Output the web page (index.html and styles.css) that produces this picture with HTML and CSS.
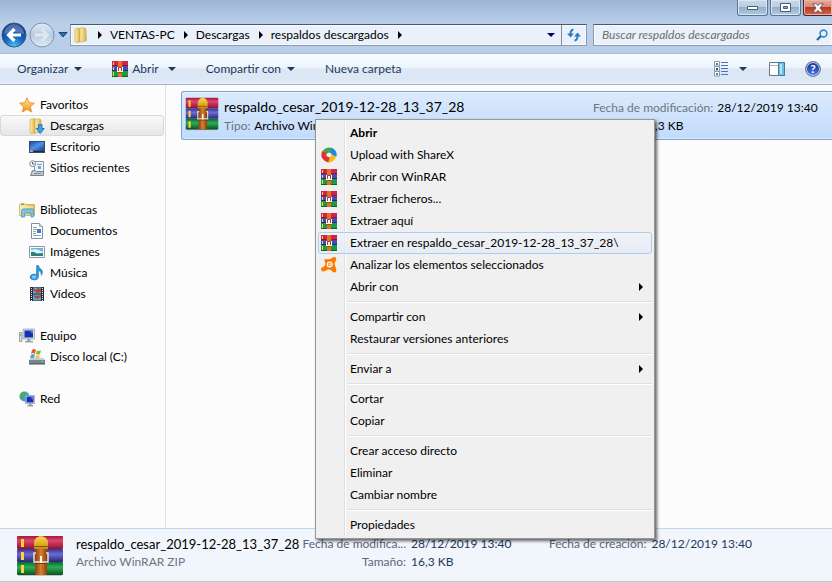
FILE: index.html
```html
<!DOCTYPE html>
<html lang="es">
<head>
<meta charset="utf-8">
<title>respaldos descargados</title>
<link rel="stylesheet" href="styles.css">
</head>
<body>
<svg class="defs" aria-hidden="true">
  <defs>
    <linearGradient id="red" x1="0" y1="0" x2="0" y2="1"><stop offset="0" stop-color="#9c1c3e"/><stop offset=".35" stop-color="#e04468"/><stop offset="1" stop-color="#8e1230"/></linearGradient>
    <linearGradient id="blue" x1="0" y1="0" x2="0" y2="1"><stop offset="0" stop-color="#36348c"/><stop offset=".4" stop-color="#6a6ad8"/><stop offset="1" stop-color="#28266e"/></linearGradient>
    <linearGradient id="green" x1="0" y1="0" x2="0" y2="1"><stop offset="0" stop-color="#0c6a2c"/><stop offset=".4" stop-color="#2cae58"/><stop offset="1" stop-color="#08521f"/></linearGradient>
    <linearGradient id="strap" x1="0" y1="0" x2="1" y2="0"><stop offset="0" stop-color="#8c3f0c"/><stop offset=".5" stop-color="#d8802f"/><stop offset="1" stop-color="#8c3f0c"/></linearGradient>
    <linearGradient id="gold" x1="0" y1="0" x2="0" y2="1"><stop offset="0" stop-color="#ffd94a"/><stop offset="1" stop-color="#c98a12"/></linearGradient>
    <linearGradient id="folder" x1="0" y1="0" x2="1" y2="0"><stop offset="0" stop-color="#fdf0b0"/><stop offset="1" stop-color="#dcb34c"/></linearGradient>
    <linearGradient id="sky" x1="0" y1="0" x2="1" y2="1"><stop offset="0" stop-color="#1c4fb4"/><stop offset=".5" stop-color="#4b94e8"/><stop offset="1" stop-color="#173f8e"/></linearGradient>
    <linearGradient id="star" x1="0" y1="0" x2="0" y2="1"><stop offset="0" stop-color="#fff0a0"/><stop offset="1" stop-color="#f58a14"/></linearGradient>
    <radialGradient id="orb" cx=".5" cy="1" r=".9"><stop offset="0" stop-color="#42d2ff"/><stop offset=".45" stop-color="#1769c6"/><stop offset="1" stop-color="#133a8c"/></radialGradient>
    <linearGradient id="ghost" x1="0" y1="0" x2="0" y2="1"><stop offset="0" stop-color="#e4ecf5"/><stop offset=".5" stop-color="#b9cbe0"/><stop offset="1" stop-color="#dfeaf6"/></linearGradient>

    <symbol id="rar" viewBox="0 0 16 16">
      <path fill="#d0214f" d="M0 0h16v5H0z"/><path fill="#8e1436" d="M0 4h16v1H0z"/>
      <path fill="#4a48b4" d="M0 5h16v5H0z"/><path fill="#2c2a78" d="M0 9h16v1H0z"/>
      <path fill="#1b9c40" d="M0 10h16v6H0z"/><path fill="#0c6326" d="M0 15h16v1H0z"/>
      <path fill="#ffd23c" d="M1 1h1v3H1zM1 6h1v3H1zM1 11h1v4H1z"/>
      <path fill="#e07022" d="M6 0h4v16H6z"/><path fill="#a84710" d="M5 4h1v1H5zM10 4h1v1h-1zM6 11h4v1H6z"/>
      <path fill="#fff" d="M5 6h1v5H5zM10 6h1v5h-1zM6 10h4v1H6z"/><path fill="#c03a1c" d="M6 6h4v4H6z"/><path fill="#fff" d="M7 7h2v3H7z"/>
    </symbol>
    <symbol id="rar-large" viewBox="0 0 48 42" preserveAspectRatio="none">
      <path fill="#0003" d="M2 39h44v2H2z"/>
      <rect x="1" y="1" width="46" height="13" rx="1" fill="url(#red)"/>
      <rect x="1" y="14" width="46" height="13" rx="1" fill="url(#blue)"/>
      <rect x="1" y="27" width="46" height="13" rx="1" fill="url(#green)"/>
      <path fill="#ffd23c" d="M5 4h3v8H5zM5 17h3v8H5zM5 30h3v8H5z"/>
      <path fill="url(#strap)" d="M19 3h12v37H19z"/>
      <path fill="url(#gold)" d="M18 8c0-9 14-9 14 0v6H18z"/>
      <path fill="#8a520e" d="M18 11h14v1H18z"/>
      <path fill="none" stroke="#e9dfd8" stroke-width="1.500" d="M20 18h-2v9h14v-9h-2"/>
      <path fill="#fff" d="M24 21h2v7h-2z"/><path fill="#7a350a" d="M19 28h12v1H19z"/>
    </symbol>
    <symbol id="folder-icon" viewBox="0 0 16 16">
      <path fill="url(#folder)" stroke="#c9a548" stroke-width=".6" d="M2 2l4-1 1 1v13l-4 .5L2 14z"/>
      <path fill="url(#folder)" stroke="#c9a548" stroke-width=".6" d="M7 1h5l1 1v12l-5 1H7z"/><path fill="#8fc7e4" d="M13 10h1v4h-1z"/><path fill="#edd583" d="M13 5h1v5h-1z"/>
    </symbol>
    <symbol id="star-icon" viewBox="0 0 16 16"><path fill="url(#star)" stroke="#e08a24" stroke-width=".8" d="M8 .8l2.100 4.800 5.300.6-4 3.600 1.200 5.200L8 12.300 3.400 15l1.200-5.200-4-3.600 5.300-.6z"/></symbol>
    <symbol id="downloads" viewBox="0 0 16 16"><path fill="url(#folder)" stroke="#c9a548" stroke-width=".6" d="M1 1.500l4-1L6 1v14l-4 .5-1-1z"/><path fill="url(#folder)" stroke="#c9a548" stroke-width=".6" d="M6 1h5l1 1v12l-5 1H6z"/><path fill="#38a6ea" stroke="#1467b4" stroke-width=".8" d="M9.500 6.500h3.500v4h2.300L11.300 15.500 7.200 10.500h2.300z"/></symbol>
    <symbol id="desktop" viewBox="0 0 16 16"><path fill="#344a6c" d="M0 2h16v12H0z"/><path fill="url(#sky)" d="M1 3h14v8.500H1z"/><path fill="#1d2c46" d="M1 12h14v1H1z"/><path fill="#47d5f2" d="M1 11h3v2H1z"/><path fill="#ed5c36" d="M2 10h2v2H2z"/></symbol>
    <symbol id="recent" viewBox="0 0 16 16"><path fill="#f2f6fa" stroke="#8f9aa6" d="M5.500 1.500h9v10h-9z"/><path fill="#6aa6d8" d="M8 4h5v1H8zM9 6h3v3H9z"/><path fill="#c5ccd2" stroke="#79828b" d="M3.500 10.500h3l1 1h7v4h-13z"/><path fill="#888" d="M5 13h7v1H5z"/><circle cx="3.700" cy="3.700" r="3" fill="#f4f7fa" stroke="#808b97"/><path fill="none" stroke="#44698d" d="M3.500 2v2h2"/></symbol>
    <symbol id="library" viewBox="0 0 16 16"><path fill="url(#folder)" stroke="#c9a548" stroke-width=".7" d="M.5 2.500l1-1h4l1 1h9v11H.5z"/><path fill="#67b846" d="M2 2h3v1H2z"/><path fill="#fff2bd" d="M1.500 4.500h13v1h-13z"/><path fill="#7bc6e8" stroke="#3d8fba" stroke-width=".7" d="M2.500 15V9q0-2 2-2h8q2 0 2 2v6H12v-3q0-1-1-1H6.500q-1 0-1 1v3z"/></symbol>
    <symbol id="document" viewBox="0 0 16 16"><path fill="#fff" stroke="#7d8fa2" d="M2.500.5h8l3 3v12h-11z"/><path fill="#d4dfe9" stroke="#7d8fa2" stroke-width=".7" d="M10.500.5v3h3"/><path stroke="#92a7bc" d="M4 4.500h4M4 6.500h4M4 8.500h3M4 10.500h3M4 12.500h8"/><path fill="#3c7fce" d="M8 6h4v4H8z"/></symbol>
    <symbol id="image" viewBox="0 0 16 16"><path fill="#fff" stroke="#8a99a6" d="M.5 2.500h15v11H.5z"/><path fill="#69b7e8" d="M2 4h12v8H2z"/><path fill="#e4f5fd" d="M2 6q6-2 12 2v1H2z"/><path fill="#2f7f78" d="M2 8q3-1 6 2l6-1v3H2z"/></symbol>
    <symbol id="music" viewBox="0 0 16 16"><path fill="#2f92dc" stroke="#196cb0" stroke-width=".5" d="M7.500.5h2q0 2 3 4 2 2 0 6 0-4-3-5v6q0 3.500-4.500 3.500-4-.5-4-3 .5-3 4-3l2.500.5z"/><ellipse cx="5" cy="12" rx="2.400" ry="1.700" fill="#74c9f5"/></symbol>
    <symbol id="video" viewBox="0 0 16 16"><path fill="#26313e" d="M1 1h14v14H1z"/><path fill="#5ca8dc" d="M4 1.500h8v6H4zM4 8.500h8v6H4z"/><path fill="#b3492e" d="M4 2l3 2 2-2 3 1v3l-4 1-4-3zM5 9l2 1 5-1v2l-4 2-3-2z"/><path stroke="#e8edf0" stroke-width="1" stroke-dasharray="1 1" d="M2.500 2v13M13.500 2v13"/></symbol>
    <symbol id="computer" viewBox="0 0 16 16"><path fill="#d7dce0" stroke="#7d878f" stroke-width=".7" d="M.5 4.500h2.500v9H.5z"/><path fill="#6ac743" d="M1 6h1v2H1z"/><path fill="#d6dbe0" stroke="#8b949c" stroke-width=".6" d="M4 1h11.500v10H4z"/><path fill="#1631b4" d="M5.500 2.500h8.500v7H5.500z"/><path fill="#5878ea" d="M9 2.500h5v3z"/><path fill="#9aa3ab" d="M8 11h3.500v2H14v1.500H6V13h2z"/></symbol>
    <symbol id="drive" viewBox="0 0 16 16"><path fill="#e45c2c" d="M3 1q2-2 4 0L6 5Q4 3 2 5z"/><path fill="#7bbe38" d="M8 1.500q2 1 4-.5l-1 4q-2 1-4 0z"/><path fill="#49a4df" d="M2 6q2-2 4 0L5 9H1z"/><path fill="#f9c42c" d="M7 6q2 1 4 0l-1 3.500H6z"/><path fill="#c5ccd1" d="M1.500 9h13L16 11H0z"/><path fill="#78848e" d="M0 11h16v4H0z"/><path fill="#454f58" d="M0 14.500h16v1H0z"/><path fill="#68e15c" d="M12 12h2v1h-2z"/></symbol>
    <symbol id="network" viewBox="0 0 16 16"><circle cx="5.500" cy="5.500" r="5" fill="#3d9ee0"/><path fill="#47b149" d="M2 2q2-2 4-1l1 2-3 2 1 2-3 1-1-3zM6 6l3-1v4H7z"/><path fill="#dde1e4" stroke="#7f8990" stroke-width=".6" d="M6.500 4.500h9.200v8H6.500z"/><path fill="#1631b4" d="M7.500 5.500h7v6h-7z"/><path fill="#5878ea" d="M11 5.500h3.500v4z"/><path fill="#959da5" d="M10 12.500h2.500v1.500H14v1.500H8.500V14H10z"/></symbol>
    <symbol id="sharex" viewBox="0 0 16 16"><g fill="none" stroke-width="5"><path stroke="#38ac48" d="M3.500 5.500Q7 1.500 11 4"/><path stroke="#2687e4" d="M9.500 3q4.500 2 3.500 6"/><path stroke="#f8bd19" d="M13 8.500q-2 5-6.500 4.500"/><path stroke="#e33233" d="M8 13Q1 11 3.500 5"/></g></symbol>
    <symbol id="avast" viewBox="0 0 16 16"><path fill="#ff7800" d="M4.500 2Q9 3 11 1q3-2 4 0 1 2-1 4-1 3 1 6 1 4-1 4.500-2 .5-4-2.500-3-1-5 .5-4 2-5-.5-.5-2.500 3-3.500Q5 8 4 5 2.500 2 4.500 2z"/><circle cx="8.700" cy="7.500" r="2.400" fill="none" stroke="#fff" stroke-width="1.200"/><circle cx="8.700" cy="7.500" r=".9" fill="#fff"/></symbol>
    <symbol id="down" viewBox="0 0 8 4"><path fill="currentColor" d="M0 0h8L4 4z"/></symbol>
    <symbol id="right" viewBox="0 0 4 8"><path fill="currentColor" d="M0 0l4 4-4 4z"/></symbol>
  </defs>
</svg>

<div class="window">
  <header class="titlebar">
    <button class="caption" aria-label="Minimizar"><svg width="12" height="6" viewBox="0 0 12 6"><path fill="#fff" stroke="#4d5c70" d="M.5 1.500h10v3H.5z"/></svg></button>
    <button class="caption" aria-label="Maximizar"><svg width="12" height="10" viewBox="0 0 12 10"><path fill="#fff" stroke="#4d5c70" d="M.5.5h10v8H.5z"/><path fill="#8fa8c4" stroke="#4d5c70" d="M3.500 3.500h4v2h-4z"/></svg></button>
    <button class="caption close" aria-label="Cerrar"><svg width="12" height="10" viewBox="0 0 12 10"><path fill="#fff" stroke="#5c4650" stroke-width=".8" d="M.8.8h3.500L6 2.700 7.700.8h3.500L8 5l3.200 4.200H7.700L6 7.300 4.300 9.200H.8L4 5z"/></svg></button>
  </header>

  <nav class="navbar">
    <div class="history">
      <button aria-label="Atrás"><svg width="26" height="26" viewBox="0 0 26 26"><circle cx="13" cy="13" r="12" fill="url(#orb)" stroke="#3d5678"/><path fill="#fff" opacity=".25" d="M3 12a10 10 0 0 1 20 0q-10-4-20 0z"/><path fill="none" stroke="#fff" stroke-width="3.200" d="M20 13H8M13.500 7L7.500 13l6 6"/></svg></button>
      <button aria-label="Adelante"><svg width="26" height="26" viewBox="0 0 26 26"><circle cx="13" cy="13" r="12" fill="url(#ghost)" stroke="#7c92ae"/><path fill="none" stroke="#dce7f2" stroke-width="3" d="M6 13h12M12.500 7l6 6-6 6"/></svg></button>
      <button class="recent-pages" aria-label="Páginas recientes"><svg width="10" height="6" viewBox="0 0 10 6"><path fill="#2674a8" stroke="#1b3f78" d="M1 .5h8L5 5z"/></svg></button>
    </div>
    <div class="address">
      <svg class="icon" width="16" height="16"><use href="#folder-icon"/></svg>
      <svg class="sep" width="4" height="8"><use href="#right"/></svg>
      <button>VENTAS-PC</button>
      <svg class="sep" width="4" height="8"><use href="#right"/></svg>
      <button>Descargas</button>
      <svg class="sep" width="4" height="8"><use href="#right"/></svg>
      <button>respaldos descargados</button>
      <svg class="sep" width="4" height="8"><use href="#right"/></svg>
      <button class="address-menu" aria-label="Ubicaciones anteriores"><svg width="8" height="4"><use href="#down"/></svg></button>
      <button class="refresh" aria-label="Actualizar"><svg width="14" height="14" viewBox="0 0 14 14"><g fill="none" stroke="#2b7cc8" stroke-width="2"><path d="M6.500 1.500Q3.500 2 3.500 6M7.500 12.500q3-.5 3-4.500"/></g><path fill="#2b7cc8" d="M0 5.500h7L3.500 9.500zM7 8.500h7L10.500 4.500z"/></svg></button>
    </div>
    <label class="search">
      <input type="search" aria-label="Buscar" placeholder="Buscar respaldos descargados">
      <svg width="12" height="12" viewBox="0 0 12 12"><circle cx="7.500" cy="4.500" r="3.400" fill="#e6f3fd" stroke="#3a86cc" stroke-width="1.600"/><path stroke="#2862a8" stroke-width="2.200" d="M5 7L1 11"/></svg>
    </label>
  </nav>

  <div class="toolbar">
    <button>Organizar <svg width="8" height="4"><use href="#down"/></svg></button>
    <button class="open"><svg width="16" height="16"><use href="#rar"/></svg><span>Abrir</span><svg width="8" height="4"><use href="#down"/></svg></button>
    <button>Compartir con <svg width="8" height="4"><use href="#down"/></svg></button>
    <button>Nueva carpeta</button>
    <div class="tools">
      <button aria-label="Cambiar la vista"><svg width="15" height="16" viewBox="0 0 15 16"><path fill="#fff" stroke="#8b98a5" d="M.5.500h5v4.500h-5zM.5 5.500h5v4.500h-5zM.5 10.500h5v4.500h-5z"/><path fill="#20a08a" d="M2 2h2v2H2zM2 12h2v2H2z"/><path fill="#234f9c" d="M2 7h2v2H2z"/><path stroke="#4579bb" d="M7 1.500h7M7 4.500h7M7 7.500h7M7 10.500h7M7 13.500h7"/></svg></button>
      <button class="view-menu" aria-label="Más opciones"><svg width="8" height="4"><use href="#down"/></svg></button>
      <button class="preview" aria-label="Panel de vista previa"><svg width="16" height="14" viewBox="0 0 16 14"><path fill="#fff" stroke="#66788a" d="M.5.500h15v13H.5z"/><path stroke="#a5b1bc" d="M1 3.500h8"/><path fill="#6cbfdf" stroke="#437d9c" d="M9.500.5h6v13h-6z"/><path fill="#b4e4f5" d="M11 2h2v10h-2z"/></svg></button>
      <button aria-label="Ayuda" class="help"><span>?</span></button>
    </div>
  </div>

  <div class="body">
    <aside class="sidebar">
      <ul class="group">
        <li><a href="#"><svg><use href="#star-icon"/></svg>Favoritos</a></li>
        <li class="child selected"><a href="#"><svg><use href="#downloads"/></svg>Descargas</a></li>
        <li class="child"><a href="#"><svg><use href="#desktop"/></svg>Escritorio</a></li>
        <li class="child"><a href="#"><svg><use href="#recent"/></svg>Sitios recientes</a></li>
      </ul>
      <ul class="group">
        <li><a href="#"><svg><use href="#library"/></svg>Bibliotecas</a></li>
        <li class="child"><a href="#"><svg><use href="#document"/></svg>Documentos</a></li>
        <li class="child"><a href="#"><svg><use href="#image"/></svg>Imágenes</a></li>
        <li class="child"><a href="#"><svg><use href="#music"/></svg>Música</a></li>
        <li class="child"><a href="#"><svg><use href="#video"/></svg>Vídeos</a></li>
      </ul>
      <ul class="group">
        <li><a href="#"><svg><use href="#computer"/></svg>Equipo</a></li>
        <li class="child"><a href="#"><svg><use href="#drive"/></svg>Disco local (C:)</a></li>
      </ul>
      <ul class="group">
        <li><a href="#"><svg><use href="#network"/></svg>Red</a></li>
      </ul>
    </aside>
    <main class="files">
      <div class="file">
        <svg width="34" height="34"><use href="#rar-large"/></svg>
        <div class="file-main">
          <div class="file-name">respaldo_cesar_2019-12-28_13_37_28</div>
          <div class="meta"><span class="label">Tipo:</span> Archivo WinRAR</div>
        </div>
        <div class="file-side">
          <div class="meta"><span class="label">Fecha de modificación:</span> 28/12/2019 13:40</div>
          <div class="meta"><span class="label">Tamaño:</span> 16,3 KB</div>
        </div>
      </div>
    </main>
  </div>

  <footer class="details">
    <svg width="48" height="42"><use href="#rar-large"/></svg>
    <div class="summary">
      <div class="details-name">respaldo_cesar_2019-12-28_13_37_28</div>
      <div class="label">Archivo WinRAR ZIP</div>
    </div>
    <dl class="modified">
      <dt>Fecha de modifica...</dt><dd>28/12/2019 13:40</dd>
      <dt>Tamaño:</dt><dd>16,3 KB</dd>
    </dl>
    <dl>
      <dt>Fecha de creación:</dt><dd>28/12/2019 13:40</dd>
    </dl>
  </footer>
</div>

<div class="menu" role="menu">
  <button role="menuitem"><i></i><b>Abrir</b></button>
  <button role="menuitem"><svg><use href="#sharex"/></svg><span>Upload with ShareX</span></button>
  <button role="menuitem"><svg><use href="#rar"/></svg><span>Abrir con WinRAR</span></button>
  <button role="menuitem"><svg><use href="#rar"/></svg><span>Extraer ficheros...</span></button>
  <button role="menuitem"><svg><use href="#rar"/></svg><span>Extraer aquí</span></button>
  <button role="menuitem" class="hover"><svg><use href="#rar"/></svg><span>Extraer en respaldo_cesar_2019-12-28_13_37_28\</span></button>
  <button role="menuitem"><svg><use href="#avast"/></svg><span>Analizar los elementos seleccionados</span></button>
  <button role="menuitem" class="sub"><i></i><span>Abrir con</span><svg><use href="#right"/></svg></button>
  <hr>
  <button role="menuitem" class="sub"><i></i><span>Compartir con</span><svg><use href="#right"/></svg></button>
  <button role="menuitem"><i></i><span>Restaurar versiones anteriores</span></button>
  <hr>
  <button role="menuitem" class="sub"><i></i><span>Enviar a</span><svg><use href="#right"/></svg></button>
  <hr>
  <button role="menuitem"><i></i><span>Cortar</span></button>
  <button role="menuitem"><i></i><span>Copiar</span></button>
  <hr>
  <button role="menuitem"><i></i><span>Crear acceso directo</span></button>
  <button role="menuitem"><i></i><span>Eliminar</span></button>
  <button role="menuitem"><i></i><span>Cambiar nombre</span></button>
  <hr>
  <button role="menuitem"><i></i><span>Propiedades</span></button>
</div>
</body>
</html>
```
FILE: styles.css
```css
* { box-sizing: border-box; }

body {
  margin: 0;
  font: 12px/18px Lato, "Open Sans", sans-serif;
  color: #000;
  overflow: hidden;
}

button {
  font: inherit;
  color: inherit;
  background: none;
  border: 0;
  padding: 0;
  white-space: nowrap;
}

svg { flex: none; display: block; }
.defs { position: absolute; width: 0; height: 0; }

.window {
  display: flex;
  flex-direction: column;
  height: 100vh;
  background: linear-gradient(#9db6d4, #bad0ea 24px, #b7cde8 52px);
}

/* Title bar */
.titlebar {
  display: flex;
  justify-content: flex-end;
  gap: 2px;
  height: 22px;
  overflow: hidden;
}
.caption {
  display: flex;
  align-items: center;
  justify-content: center;
  width: 31px;
  height: 16px;
  border: 1px solid #5e7491;
  border-top: 0;
  border-radius: 0 0 3px 3px;
  background: linear-gradient(#c8d9eb, #b9cde3 45%, #93aecb 50%, #b4cbe4);
  box-shadow: inset 0 0 0 1px #d9e6f4;
}
.close {
  border-right: 0;
  border-color: #4e2028;
  border-bottom-right-radius: 0;
  width: 29px;
  background: linear-gradient(#e9a99b, #d98877 45%, #bb3820 50%, #d0684e);
  box-shadow: inset 0 0 0 1px #eab4a8;
}

/* Navigation */
.navbar {
  display: flex;
  align-items: center;
  height: 31px;
  padding: 0 0 5px 1px;
}
.history { display: flex; align-items: center; gap: 2px; width: 69px; }
.recent-pages { padding-left: 1px; }
.address, .search {
  display: flex;
  align-items: center;
  height: 22px;
  border: 1px solid #8d9bb0;
  border-top-color: #4c586a;
  background: #eaf1fa;
  box-shadow: inset 0 0 0 1px #f8fbfe;
}
.address { flex: 1; padding-left: 2px; gap: 8px; }
.address .sep { margin-left: 1px; }
.address-menu { margin-left: auto; padding: 8px 6px; color: #00006a; }
.refresh {
  display: flex;
  align-items: center;
  justify-content: center;
  width: 25px;
  height: 20px;
  margin-left: -8px;
  border-left: 1px solid #7d8ca2;
}
.search { width: 239px; margin-left: 6px; padding: 0 4px 0 8px; border-right: 0; }
.search input {
  flex: 1;
  min-width: 0;
  border: 0;
  padding: 0;
  outline: 0;
  background: none;
  font: inherit;
  font-style: italic;
}
.search input::placeholder { color: #6d6d6d; opacity: 1; }

/* Command bar */
.toolbar {
  display: flex;
  align-items: center;
  height: 32px;
  padding: 0 11px 0 17px;
  gap: 30px;
  color: #1e395b;
  background: linear-gradient(#fafdff, #edf4fc 45%, #dce6f4 50%, #dde8f6 88%, #e8f0fa);
  border-top: 1px solid #a9bfda;
  border-bottom: 1px solid #a0b1cb;
}
.toolbar button { display: flex; align-items: center; gap: 6px; }
.toolbar .open { gap: 4px; }
.toolbar .open span { padding-right: 5px; }
.tools { display: flex; align-items: center; margin-left: auto; gap: 10px; }
.tools .view-menu { padding-right: 12px; }
.tools .preview { padding-right: 10px; }
.toolbar .help {
  justify-content: center;
  width: 16px;
  height: 16px;
  border: 1px solid #727d92;
  border-radius: 50%;
  color: #fff;
  font-weight: 700;
  background: radial-gradient(circle at 50% 90%, #4d86f0, #1e3ba8 70%);
  box-shadow: inset 0 0 0 1px #c6d0e2;
}

/* Content */
.body { display: flex; flex: 1; min-height: 0; background: #fcfcfc; }
.sidebar {
  width: 166px;
  padding-top: 9px;
  border-right: 1px solid #d6e2f4;
}
.group { list-style: none; margin: 0 0 21px; padding: 0; }
.group li { padding-left: 18px; height: 21px; border: 1px solid transparent; }
.group .child { padding-left: 28px; }
.group a {
  display: flex;
  align-items: center;
  gap: 5px;
  height: 19px;
  color: inherit;
  text-decoration: none;
}
.group svg { width: 16px; height: 16px; }
.group .selected {
  margin-right: 1px;
  border-color: #d9d9d9;
  border-radius: 3px;
  background: linear-gradient(#f9f9f9, #e6e6e6);
}
.files { flex: 1; min-width: 0; padding: 6px 0 0 15px; }
.file {
  display: flex;
  align-items: flex-end;
  height: 49px;
  padding: 0 24px 4px 3px;
  border: 1px solid #7da2ce;
  border-right: 0;
  border-radius: 3px 0 0 3px;
  background: linear-gradient(#dceafc, #c1dbfc);
  box-shadow: inset 0 1px #ecf4fe, inset 0 -1px #dcebfd;
  white-space: nowrap;
}
.file svg { align-self: center; }
.file-main { flex: 1; margin-left: 5px; }
.file-name { font-size: 14px; line-height: 20px; }
.file-side { width: 215px; }
.label { color: #6d7580; }
.meta .label { margin-right: 1px; }

/* Details pane */
.details {
  display: flex;
  height: 54px;
  padding: 6px 16px 0;
  background: #f1f5fc;
  border-top: 1px solid #c3d5ea;
  border-bottom: 1px solid #b5c9e2;
  white-space: nowrap;
}
.summary { width: 216px; margin-left: 12px; }
.details-name { font-size: 13px; }
.details dl {
  display: grid;
  grid-template-columns: 106px auto;
  column-gap: 5px;
  align-content: start;
  margin: 0 0 0 8px;
  color: #1e395b;
}
.details .modified { margin-right: 21px; }
.details dt { text-align: right; color: #5a6779; }
.details dd { margin: 0; }

/* Context menu */
.menu {
  position: absolute;
  left: 315px;
  top: 119px;
  width: 340px;
  padding: 2px;
  border: 1px solid #979797;
  background: linear-gradient(90deg, #f0f0f0 28px, #e0e0e0 28px 29px, #fff 29px 30px, #f0f0f0 30px);
  background-clip: content-box;
  background-color: #f0f0f0;
  box-shadow: 2px 2px 3px #0009, inset 0 0 0 2px #f0f0f0;
}
.menu button {
  display: flex;
  align-items: center;
  width: 100%;
  height: 22px;
  padding: 0 8px 0 2px;
  border: 1px solid transparent;
  border-radius: 3px;
  text-align: left;
}
.menu svg, .menu i { width: 16px; height: 16px; margin-right: 13px; }
.menu .sub svg { width: 4px; height: 8px; margin: 0 0 0 auto; }
.menu .hover { border-color: #aeccf0; background: linear-gradient(#f0f3f9aa, #e3eaf6aa); }
.menu hr {
  height: 2px;
  margin: 3px 0 3px 30px;
  border: 0;
  border-top: 1px solid #e0e0e0;
  background: #fff;
}
```
